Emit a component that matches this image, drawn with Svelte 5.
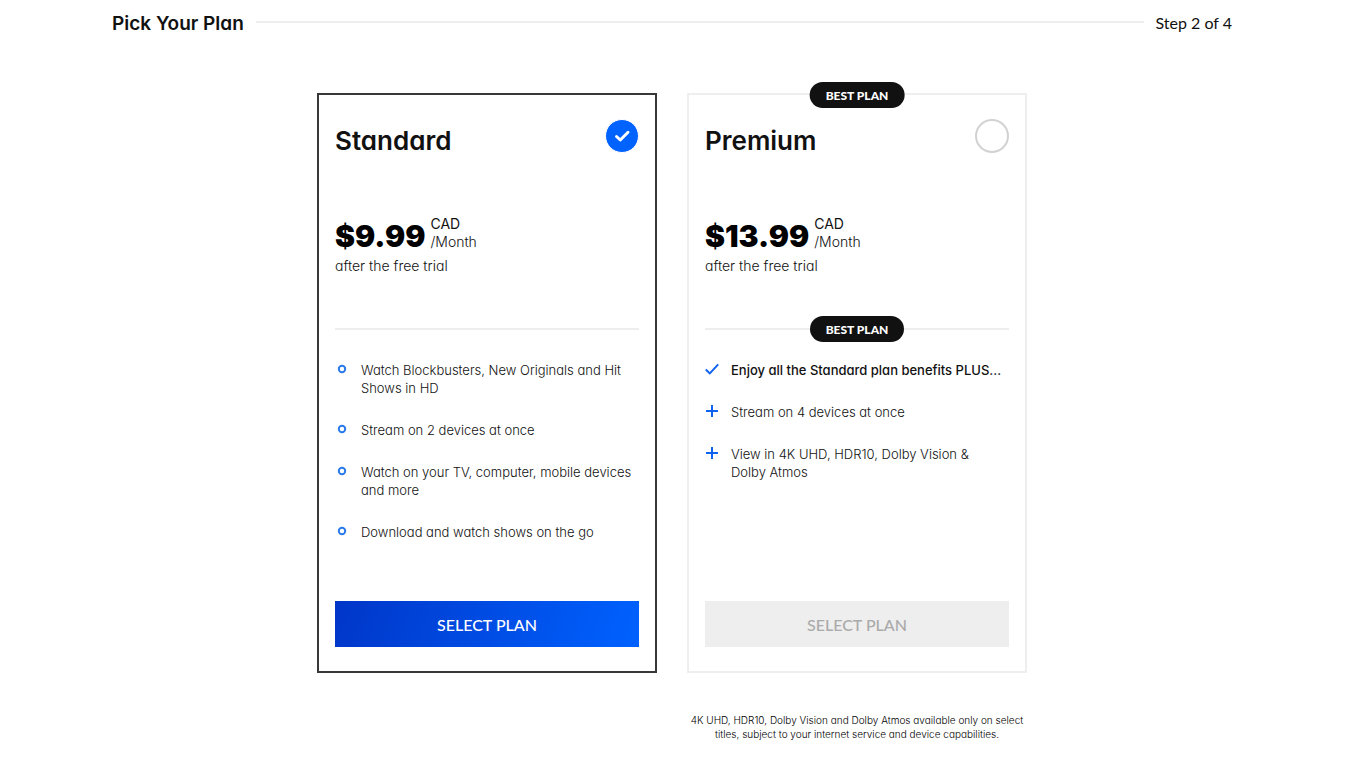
<script>
  let selected = $state('standard');

  const plans = [
    {
      id: 'standard',
      name: 'Standard',
      price: '$9.99',
      best: false,
      features: [
        { icon: 'ring', text: 'Watch Blockbusters, New Originals and Hit Shows in HD' },
        { icon: 'ring', text: 'Stream on 2 devices at once' },
        { icon: 'ring', text: 'Watch on your TV, computer, mobile devices and more' },
        { icon: 'ring', text: 'Download and watch shows on the go' }
      ]
    },
    {
      id: 'premium',
      name: 'Premium',
      price: '$13.99',
      best: true,
      features: [
        { icon: 'check', text: 'Enjoy all the Standard plan benefits PLUS...', strong: true },
        { icon: 'plus', text: 'Stream on 4 devices at once' },
        { icon: 'plus', text: 'View in 4K UHD, HDR10, Dolby Vision & Dolby Atmos' }
      ]
    }
  ];
</script>

<div class="page">
  <header class="steps">
    <h1>Pick Your Plan</h1>
    <span class="rule"></span>
    <span class="step">Step 2 of 4</span>
  </header>

  <main class="plans">
    {#each plans as plan (plan.id)}
      <section class="card" class:selected={selected === plan.id}>
        {#if plan.best}
          <span class="badge top">BEST PLAN</span>
        {/if}
        <div class="head">
          <label class="name" for={plan.id}>{plan.name}</label>
          <span class="pick">
            <input type="radio" name="plan" id={plan.id} value={plan.id} bind:group={selected} />
            {#if selected === plan.id}
              <svg viewBox="0 0 34 34" width="34" height="34" aria-hidden="true">
                <path d="M11.5 17.5 15.3 21 23 13.3" fill="none" stroke="#fff" stroke-width="3" stroke-linecap="round" stroke-linejoin="round" />
              </svg>
            {/if}
          </span>
        </div>

        <div class="cost">
          <strong class="price">{plan.price}</strong>
          <span class="unit"><span class="currency">CAD</span><span>/Month</span></span>
        </div>
        <p class="trial">after the free trial</p>

        <div class="divider">
          <span class="rule"></span>
          {#if plan.best}
            <span class="badge">BEST PLAN</span>
            <span class="rule"></span>
          {/if}
        </div>

        <ul>
          {#each plan.features as feature}
            <li class:strong={feature.strong}>
              <svg viewBox="0 0 14 14" width="14" height="14" fill="none" stroke="#0f62f0" stroke-width="2" aria-hidden="true">
                {#if feature.icon === 'ring'}
                  <circle cx="7" cy="7" r="3.2" stroke="#2a7bea" />
                {:else if feature.icon === 'check'}
                  <path d="M0.8 7.5 4.8 11.4 13.2 2.4" />
                {:else}
                  <path d="M7 1v12M1 7h12" />
                {/if}
              </svg>
              <span>{feature.text}</span>
            </li>
          {/each}
        </ul>

        <button type="button" onclick={() => (selected = plan.id)}>SELECT PLAN</button>
      </section>
    {/each}
    <p class="note">
      4K UHD, HDR10, Dolby Vision and Dolby Atmos available only on select titles, subject to your
      internet service and device capabilities.
    </p>
  </main>
</div>

<style>
  :global(body) {
    background: #fff;
  }
  .page {
    font-family: Inter, 'Liberation Sans', sans-serif;
    font-feature-settings: 'cv11';
    color: #111;
    padding: 8px 25px 20px 16px;
  }
  h1,
  p,
  ul {
    margin: 0;
    padding: 0;
  }
  .rule {
    flex: 1;
    height: 2px;
    background: #eee;
  }
  .steps {
    display: flex;
    align-items: center;
    gap: 12px;
    max-width: 1120px;
    margin: 0 auto;
  }
  .steps .rule {
    margin-bottom: 4px;
  }
  h1 {
    font-size: 19px;
    line-height: 32px;
    font-weight: 600;
  }
  .step {
    font-family: Lato, sans-serif;
    font-size: 16px;
    line-height: 30px;
    margin-bottom: 2px;
  }
  .plans {
    display: grid;
    grid-template-columns: repeat(2, minmax(0, 340px));
    justify-content: center;
    column-gap: 30px;
    margin-top: 53px;
  }
  .card {
    position: relative;
    display: flex;
    flex-direction: column;
    padding: 24px 16px;
    border: 2px solid #eee;
  }
  .card.selected {
    border-color: #383838;
  }
  .badge {
    padding: 2px 16px 0;
    border-radius: 13px;
    background: #111;
    color: #fff;
    font-family: Lato, sans-serif;
    font-size: 12px;
    line-height: 24px;
    font-weight: 900;
    white-space: nowrap;
  }
  .badge.top {
    position: absolute;
    top: -13px;
    left: 50%;
    transform: translateX(-50%);
  }
  .head {
    display: flex;
    justify-content: space-between;
    margin-bottom: 52px;
  }
  .name {
    font-size: 26px;
    line-height: 44px;
    font-weight: 600;
    cursor: pointer;
  }
  .pick {
    display: grid;
    align-self: start;
  }
  .pick > :global(*) {
    grid-area: 1 / 1;
  }
  .pick svg {
    pointer-events: none;
  }
  input {
    appearance: none;
    box-sizing: border-box;
    width: 34px;
    height: 34px;
    margin: 0;
    border: 2px solid #d2d2d2;
    border-radius: 50%;
    cursor: pointer;
  }
  input:checked {
    border: 1px solid #fff;
    background: #0062ff;
  }
  .cost {
    display: flex;
    gap: 5px;
    margin-bottom: 6px;
  }
  .price {
    color: #000;
    font-size: 30px;
    line-height: 42px;
    height: 36px;
    font-weight: 900;
  }
  .unit {
    display: flex;
    flex-direction: column;
    font-size: 14px;
    line-height: 18px;
    font-weight: 300;
  }
  .currency {
    font-weight: 400;
  }
  .trial {
    font-size: 14px;
    line-height: 18px;
    font-weight: 300;
  }
  .divider {
    display: flex;
    align-items: center;
    height: 26px;
    margin: 41px 0 19px;
  }
  ul {
    display: flex;
    flex-direction: column;
    gap: 24px;
    margin-bottom: 60px;
    list-style: none;
  }
  li {
    display: flex;
    gap: 12px;
    padding-right: 4px;
    font-size: 13px;
    line-height: 18px;
    font-weight: 300;
  }
  li svg {
    flex: none;
    margin-top: 1px;
  }
  li.strong {
    font-weight: 500;
  }
  button {
    margin-top: auto;
    padding: 2px 0 0;
    border: 0;
    background: #eee;
    color: #aaa;
    font-family: Lato, sans-serif;
    font-size: 16px;
    line-height: 44px;
    font-weight: 500;
    cursor: pointer;
  }
  .selected button {
    background: linear-gradient(110deg, #0036c8, #0062ff);
    color: #fff;
  }
  .note {
    grid-column: 2;
    margin-top: 40px;
    color: #000;
    font-size: 10px;
    line-height: 14px;
    font-weight: 300;
    text-align: center;
  }
</style>
